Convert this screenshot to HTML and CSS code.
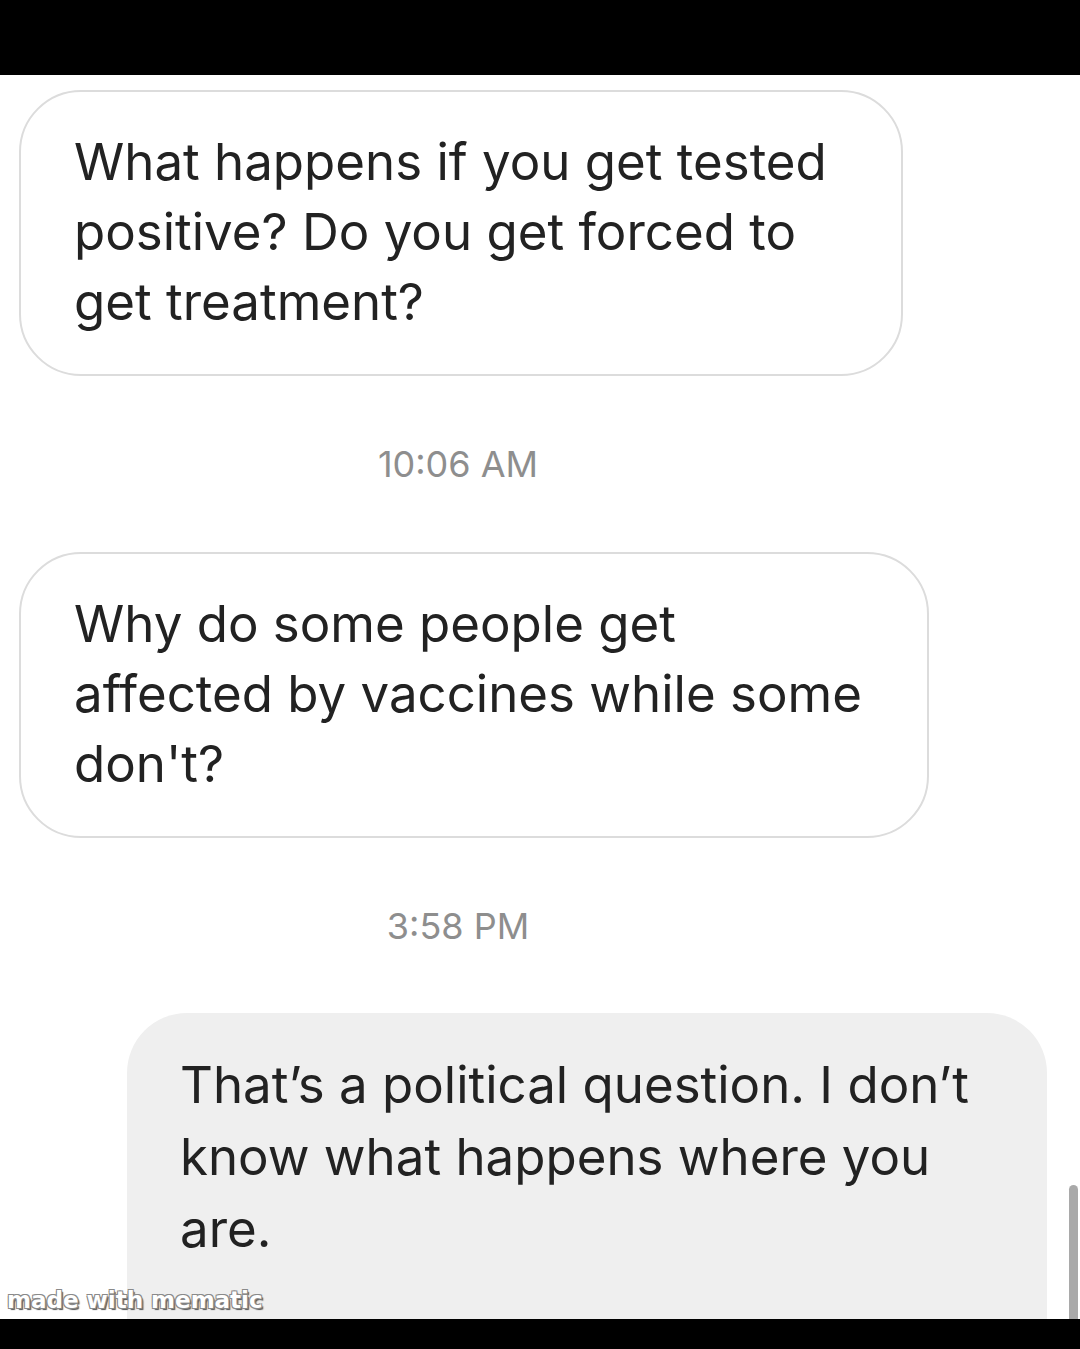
FILE: index.html
```html
<!DOCTYPE html>
<html lang="en">
<head>
<meta charset="utf-8">
<title>Chat</title>
<link rel="stylesheet" href="styles.css">
</head>
<body>
<div class="frame">
  <div class="bar-top"></div>
  <main class="chat">
    <div class="bubble bubble-in b1">What happens if you get tested<br>positive? Do you get forced to<br>get treatment?</div>
    <div class="stamp s1"><span>10:06 AM</span></div>
    <div class="bubble bubble-in b2">Why do some people get<br>affected by vaccines while some<br>don't?</div>
    <div class="stamp s2"><span>3:58 PM</span></div>
    <div class="bubble bubble-out b3">That’s a political question. I don’t<br>know what happens where you<br>are.</div>
    <div class="scrollbar"></div>
    <div class="watermark">made with mematic</div>
  </main>
  <div class="bar-bottom"></div>
</div>
</body>
</html>
```
FILE: styles.css
```css
html, body {
  margin: 0;
  padding: 0;
  background: #000;
}
.frame {
  width: 1080px;
  height: 1349px;
  display: flex;
  flex-direction: column;
  overflow: hidden;
}
.bar-top {
  height: 75px;
  background: #000;
  flex: none;
}
.bar-bottom {
  height: 30px;
  background: #000;
  flex: none;
}
.chat {
  position: relative;
  flex: none;
  height: 1244px;
  background: #fff;
  overflow: hidden;
  padding-top: 15px;
  box-sizing: border-box;
  display: flex;
  flex-direction: column;
  align-items: flex-start;
  font-family: Inter, "Liberation Sans", sans-serif;
  color: #222;
}
.bubble {
  box-sizing: border-box;
  font-size: 51px;
  line-height: 70px;
  border-radius: 62px;
  white-space: nowrap;
  flex: none;
}
.bubble-in {
  margin-left: 19px;
  border: 2px solid #dcdcdc;
  background: #fff;
  padding: 35px 20px 36px 53px;
  height: 286px;
}
.b1 { width: 884px; }
.b2 { width: 910px; }
.bubble-out {
  margin-left: 127px;
  width: 920px;
  height: 340px;
  background: #efefef;
  padding: 36px 20px 0 53px;
  line-height: 72px;
  border-radius: 60px 60px 0 0;
}
.stamp {
  box-sizing: border-box;
  width: 916px;
  display: flex;
  align-items: center;
  justify-content: center;
  font-size: 36px;
  color: #8e8e8e;
  flex: none;
}
.s1 { height: 176px; }
.s2 { height: 175px; }
.scrollbar {
  position: absolute;
  left: 1069px;
  top: 1110px;
  width: 9px;
  height: 150px;
  border-radius: 5px 5px 0 0;
  background: #a9a9a9;
}
.watermark {
  position: absolute;
  left: 7px;
  bottom: 6px;
  font-family: "DejaVu Sans", Verdana, sans-serif;
  font-weight: bold;
  font-size: 23px;
  letter-spacing: 0;
  color: #fff;
  text-shadow: -1px -1px 0 #8a8a8a, 1px -1px 0 #8a8a8a, -1px 1px 0 #8a8a8a, 1px 1px 0 #8a8a8a, 2px 2px 1px #555;
}
```
